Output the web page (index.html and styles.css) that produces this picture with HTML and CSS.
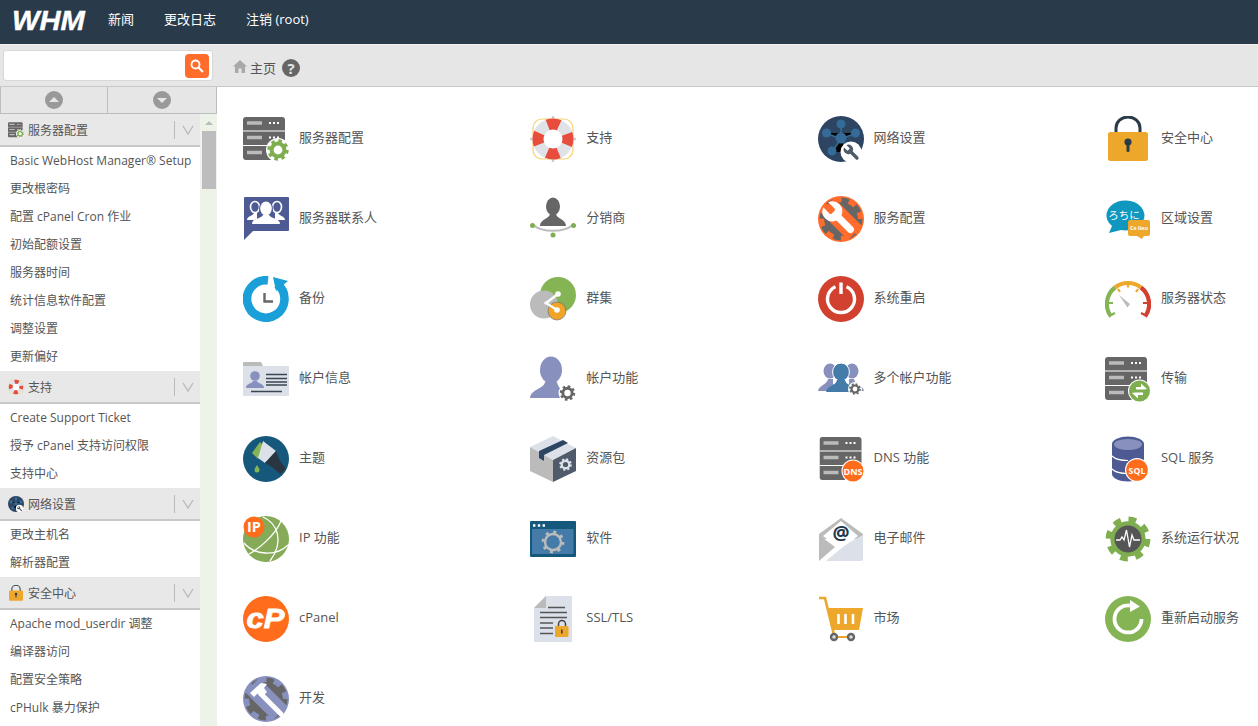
FILE: index.html
```html
<!DOCTYPE html>
<html lang="zh-CN">
<head>
    <meta charset="UTF-8">
    <meta name="viewport" content="width=device-width, initial-scale=1.0">
    <title>WHM</title>
    <link rel="stylesheet" href="styles.css">
</head>
<body>
    <!-- icon sprite, every icon is drawn in a 46x46 box -->
    <svg class="sprite" xmlns="http://www.w3.org/2000/svg">
        <symbol id="gear" viewBox="-12 -12 24 24">
            <circle r="7" fill="none" stroke="currentColor" stroke-width="4.4"/>
            <circle r="10" fill="none" stroke="currentColor" stroke-width="3.4" stroke-dasharray="3.9 3.95"/>
        </symbol>
        <symbol id="wrench" viewBox="0 0 24 24">
            <path transform="translate(24 0) scale(-1 1)" d="M14.7 6.3a1 1 0 0 0 0 1.4l1.6 1.6a1 1 0 0 0 1.4 0l3.77-3.77a6 6 0 0 1-7.94 7.94l-6.91 6.91a2.12 2.12 0 0 1-3-3l6.91-6.91a6 6 0 0 1 7.94-7.94l-3.76 3.76z" fill="currentColor"/>
        </symbol>
        <symbol id="srv" viewBox="0 0 46 46">
            <rect x="0" y="1" width="42" height="43" rx="3" fill="#666"/>
            <path d="M0 15h42M0 29.5h42" stroke="#fff" stroke-width="1"/>
            <path d="M4 7h15M4 21.5h15M4 36.5h15" stroke="#bbb" stroke-width="3.4"/>
            <path d="M26 7h2M30 7h2M34 7h2M26 21.5h2M30 21.5h2M34 21.5h2" stroke="#fff" stroke-width="2.2"/>
        </symbol>
        <symbol id="i-server" viewBox="0 0 46 46">
            <use href="#srv" width="46" height="46"/>
            <circle cx="35" cy="34" r="12" fill="#fff"/>
            <use href="#gear" x="24" y="23" width="22" height="22" color="#7fae50"/>
        </symbol>
        <symbol id="i-support" viewBox="0 0 46 46">
            <rect x="3" y="3" width="40" height="40" rx="9" fill="none" stroke="#f7d26e" stroke-width="1.2"/>
            <path d="M23 0v46M0 23h46" stroke="#ccc" stroke-width="2.4"/>
            <circle cx="23" cy="23" r="15" fill="#fff" stroke="#dfe3e8" stroke-width="11"/>
            <circle cx="23" cy="23" r="15" fill="none" stroke="#e74c3c" stroke-width="11" stroke-dasharray="11.78 11.78" stroke-dashoffset="5.89"/>
        </symbol>
        <symbol id="i-network" viewBox="0 0 46 46">
            <circle cx="23" cy="23" r="23" fill="#2d4562"/>
            <path d="M23 8V23M8 17L23 23L38 17M14 36L23 23L32 36" stroke="#356b97" stroke-width="1.6"/>
            <g fill="#356b97">
                <circle cx="23" cy="8" r="4.5"/><circle cx="8.5" cy="17" r="4.5"/><circle cx="37.5" cy="17" r="4.5"/>
                <circle cx="14" cy="35" r="4.5"/><circle cx="23" cy="22" r="5.5"/>
            </g>
            <circle cx="33" cy="36" r="10.5" fill="#fff"/>
            <use href="#wrench" x="24" y="27" width="19" height="19" color="#4f5b66"/>
        </symbol>
        <symbol id="i-lock" viewBox="0 0 46 46">
            <path d="M11 17V12a12 11 0 0 1 24 0v5" fill="none" stroke="#2b3a4a" stroke-width="3"/>
            <rect x="3" y="16" width="40" height="29" rx="2.5" fill="#eda72a"/>
            <circle cx="23" cy="26" r="3.6" fill="#2b3a4a"/>
            <rect x="21.5" y="27" width="3" height="9" rx="1.5" fill="#2b3a4a"/>
        </symbol>
        <symbol id="i-contacts" viewBox="0 0 46 46">
            <path d="M2 1h43a1 1 0 0 1 1 1v32a1 1 0 0 1-1 1H10l-9 9V2a1 1 0 0 1 1-1z" fill="#4e5a94"/>
            <g fill="none" stroke="#fff" stroke-width="1.6">
                <ellipse cx="12" cy="11" rx="4.5" ry="5.5"/><ellipse cx="34" cy="11" rx="4.5" ry="5.5"/>
            </g>
            <path d="M4 24c0-4 6-4 7-7h3v7zM42 24c0-4-6-4-7-7h-3v7z" fill="#fff"/>
            <ellipse cx="23" cy="12.5" rx="7" ry="8" fill="#4e5a94"/>
            <path d="M7.5 29.500c0-7 10-6 12-10h7c2 4 12 3 12 10z" fill="#4e5a94"/>
            <g fill="#fff">
                <ellipse cx="23" cy="12.5" rx="5.8" ry="7"/>
                <path d="M9 28c0-6 9-5 11-9h6c2 4 11 3 11 9z"/>
            </g>
        </symbol>
        <symbol id="i-reseller" viewBox="0 0 46 46">
            <ellipse cx="23" cy="10.5" rx="7" ry="9" fill="#666"/>
            <path d="M10 30c0-7 9-7 10-12h6c1 5 10 5 10 12z" fill="#666"/>
            <path d="M4 29.5c8 7 30 7 38 0" fill="none" stroke="#bbb" stroke-width="1.8"/>
            <g fill="#7fae50"><circle cx="2.5" cy="29.5" r="2.5"/><circle cx="43.5" cy="29.5" r="2.5"/><circle cx="23" cy="39" r="2.5"/></g>
        </symbol>
        <symbol id="i-service" viewBox="0 0 46 46">
            <circle cx="23" cy="23" r="23" fill="#ff6c2c"/>
            <use href="#gear" x="1" y="1" width="44" height="44" color="#666"/>
            <path d="M9 9L37 37" stroke="#ff6c2c" stroke-width="20"/>
            <use href="#wrench" x="1" y="2" width="40" height="40" color="#fff"/>
        </symbol>
        <symbol id="i-locale" viewBox="0 0 46 46">
            <path d="M4 37l3-7a19 15 0 1 1 9 4z" fill="#0f97c0"/>
            <text x="19" y="23" text-anchor="middle" class="svg-cjk" font-size="10.500" fill="#fff">ろちに</text>
            <rect x="23" y="24" width="22" height="16" rx="2" fill="#eda72a"/>
            <path d="M32 40h7l-2 3z" fill="#eda72a"/>
            <text x="34" y="34" text-anchor="middle" class="svg-label" font-size="5.4" font-weight="700" fill="#fff">Ce lieu</text>
        </symbol>
        <symbol id="i-backup" viewBox="0 0 46 46">
            <path d="M25 4.4A18.7 18.7 0 1 0 34 8" fill="none" stroke="#1a9fd9" stroke-width="8.6"/>
            <path d="M30 1l15 4-12 10z" fill="#1a9fd9"/>
            <path d="M21.5 17v8.5H30" fill="none" stroke="#666" stroke-width="2.4"/>
        </symbol>
        <symbol id="i-cluster" viewBox="0 0 46 46">
            <circle cx="28" cy="19" r="18" fill="#85b455"/>
            <circle cx="14" cy="28.5" r="14" fill="#bbb"/>
            <circle cx="27" cy="35" r="9" fill="#f0a52a" stroke="#5c6570" stroke-width="0.6"/>
            <path d="M28 18L16 27l11 7" fill="none" stroke="#fff" stroke-width="2.2"/>
            <circle cx="28" cy="18" r="2.8" fill="#fff"/><circle cx="27" cy="34" r="2.8" fill="#fff"/><circle cx="16" cy="27" r="1.6" fill="#fff"/>
        </symbol>
        <symbol id="i-restart" viewBox="0 0 46 46">
            <circle cx="23" cy="23" r="23" fill="#d2412f"/>
            <path d="M17.5 10.7A13.5 13.5 0 1 0 28.5 10.7M23 6.5V18" fill="none" stroke="#fff" stroke-width="3.4"/>
        </symbol>
        <symbol id="i-status" viewBox="0 0 46 46">
            <path d="M6 40.6A21 21 0 0 1 10 11.5" fill="none" stroke="#85b455" stroke-width="4.2"/>
            <path d="M10 11.5A21 21 0 0 1 36 11.5" fill="none" stroke="#eda72a" stroke-width="4.2"/>
            <path d="M36 11.5A21 21 0 0 1 40 40.6" fill="none" stroke="#d2412f" stroke-width="4.2"/>
            <path d="M6 39l4-2M4 27h4" stroke-width="2.2" stroke="#85b455"/>
            <path d="M13 13l2 3M23 7v4.500M33 13l-2 3" stroke-width="2.2" stroke="#eda72a"/>
            <path d="M42 27h-4M40 39l-4-2" stroke-width="2.2" stroke="#d2412f"/>
            <path d="M14 19l11 9-2.500 3.500z" fill="#bbb"/>
        </symbol>
        <symbol id="i-account" viewBox="0 0 46 46">
            <path d="M0 10V7a1 1 0 0 1 1-1h17l2 4z" fill="#bbb"/>
            <rect x="0" y="10" width="46" height="30" rx="1" fill="#dbe0e9"/>
            <circle cx="12" cy="20" r="4.8" fill="#8891bd"/>
            <path d="M3 32c0-5 6-4 7-7h4c1 3 7 2 7 7z" fill="#8891bd"/>
            <path d="M23 18.5h21M23 22.5h21M23 26h21M23 29h21M8 35.5h31" stroke="#3a4652" stroke-width="1.4"/>
        </symbol>
        <symbol id="i-functions" viewBox="0 0 46 46">
            <ellipse cx="21" cy="14" rx="11" ry="13.5" fill="#8891bd"/>
            <path d="M0 42c1-9 14-9 15-16h12c1 7 7 8 9 16z" fill="#8891bd"/>
            <circle cx="37.5" cy="37" r="9" fill="#fff"/>
            <use href="#gear" x="29.5" y="29" width="16" height="16" color="#666"/>
        </symbol>
        <symbol id="i-multi" viewBox="0 0 46 46">
            <g fill="#8891bd">
                <ellipse cx="12" cy="15" rx="6.5" ry="7.5"/><ellipse cx="34" cy="15" rx="6.5" ry="7.5"/>
                <path d="M0 35c1-6 9-6 10-12h5v12z"/><path d="M46 35c-1-6-9-6-10-12h-5v12z"/>
            </g>
            <ellipse cx="23" cy="16" rx="8.4" ry="9" fill="#447ba8" stroke="#fff" stroke-width="1"/>
            <path d="M8 36c1-7 10-6 11-12h8c1 6 10 5 11 12z" fill="#447ba8"/>
            <circle cx="37" cy="33" r="7" fill="#fff"/>
            <use href="#gear" x="31" y="27" width="12" height="12" color="#666"/>
        </symbol>
        <symbol id="i-transfer" viewBox="0 0 46 46">
            <use href="#srv" width="46" height="46"/>
            <circle cx="34.5" cy="35" r="11.5" fill="#fff"/>
            <circle cx="34.5" cy="35" r="10.5" fill="#7fae50"/>
            <path d="M31 31h5v-3.4l6 5.4-3 .6h-8zM38 39h-5v3.4l-6-5.4 3-.6h8z" fill="#fff"/>
        </symbol>
        <symbol id="i-theme" viewBox="0 0 46 46">
            <circle cx="23" cy="23" r="23" fill="#16577c"/>
            <path d="M17 6L9 17l6 6 6-13z" fill="#85b455"/>
            <path d="M20 5l13 10-11 12-7-5z" fill="#dbe0e9"/>
            <path d="M33 15L22 27l7 4 8 7 6-5-6-8z" fill="#2a3542"/>
            <path d="M14 29c2 3 2.5 4 2.5 5a2.5 2.5 0 0 1-5 0c0-1 .5-2 2.5-5z" fill="#85b455"/>
        </symbol>
        <symbol id="i-package" viewBox="0 0 46 46">
            <path d="M23 0l23 12-23 12L0 11z" fill="#dbe0e9"/>
            <path d="M0 11l23 13v22L0 35z" fill="#bbb"/>
            <path d="M23 24l23-12v23L23 46z" fill="#4f5b6a"/>
            <path d="M9 15L33 4l5 3L14 19v6l-5-3z" fill="#2d4562"/>
            <use href="#gear" x="29" y="22" width="13" height="13" color="#dbe0e9"/>
        </symbol>
        <symbol id="i-dns" viewBox="0 0 46 46">
            <use href="#srv" x="1.5" width="46" height="46"/>
            <circle cx="35" cy="35" r="11.5" fill="#fff"/>
            <circle cx="35" cy="35" r="10.5" fill="#ff6c1c"/>
            <text x="35" y="38.500" text-anchor="middle" class="svg-label" font-size="9" font-weight="700" fill="#fff">DNS</text>
        </symbol>
        <symbol id="i-sql" viewBox="0 0 46 46">
            <path d="M7 8h32v30c0 4-7 7.500-16 7.500S7 42 7 38z" fill="#4e5a94"/>
            <path d="M7 20c3 3 9 4.500 16 4.500M7 33c3 3 9 4.500 16 4.500" fill="none" stroke="#fff" stroke-width="1.200"/>
            <ellipse cx="23" cy="8" rx="16" ry="7.500" fill="#4e5a94"/>
            <ellipse cx="23" cy="8.500" rx="14" ry="5.500" fill="#8891bd"/>
            <circle cx="32" cy="34" r="12" fill="#fff"/>
            <circle cx="32" cy="34" r="10.800" fill="#ff6c1c"/>
            <text x="32" y="37.500" text-anchor="middle" class="svg-label" font-size="8.800" font-weight="700" fill="#fff">SQL</text>
        </symbol>
        <symbol id="i-ip" viewBox="0 0 46 46">
            <circle cx="23" cy="23" r="23" fill="#85ab58"/>
            <g fill="none" stroke="#fff" stroke-width="1.300">
                <path d="M20 1c14 6 22 24 7 44"/>
                <path d="M1 27c10 12 32 14 44 2"/>
                <path d="M6 38c8-4 26-18 32-33"/>
            </g>
            <circle cx="11" cy="11" r="10.500" fill="#ff6c1c"/>
            <text x="11" y="16" text-anchor="middle" class="svg-label" font-size="14.500" font-weight="700" fill="#fff">IP</text>
        </symbol>
        <symbol id="i-software" viewBox="0 0 46 46">
            <rect x="0" y="5" width="46" height="36" rx="1" fill="#16577c"/>
            <rect x="2" y="13" width="41.500" height="25" fill="#447ba8"/>
            <path d="M3 9.500h2.400M7.800 9.500h2.400M12.600 9.500h2.400" stroke="#fff" stroke-width="2.400"/>
            <circle cx="23" cy="26" r="8" fill="none" stroke="#bbb" stroke-width="2.400"/>
            <circle cx="23" cy="26" r="10" fill="none" stroke="#bbb" stroke-width="2.800" stroke-dasharray="3 4.850"/>
        </symbol>
        <symbol id="i-email" viewBox="0 0 46 46">
            <path d="M23 2L45 18v5H1v-5z" fill="#bbb"/>
            <path d="M23 5L40 20 23 33 5 20z" fill="#fff"/>
            <path d="M1 19l16 12L1 45z" fill="#bbb"/>
            <path d="M45 19v24a2 2 0 0 1-2 2H8l17-14 7-5z" fill="#dbe0e9"/>
            <text x="23" y="24" text-anchor="middle" class="svg-label" font-size="19" font-weight="700" fill="#23384d">@</text>
        </symbol>
        <symbol id="i-health" viewBox="0 0 46 46">
            <use href="#gear" width="46" height="46" color="#7fae50"/>
            <circle cx="23" cy="23" r="13.500" fill="#555"/>
            <path d="M11 24h4l2-3 2 3 2.500-10 3 17 2.500-12 2 5h6" fill="none" stroke="#fff" stroke-width="1.300"/>
        </symbol>
        <symbol id="i-cpanel" viewBox="0 0 46 46">
            <circle cx="23" cy="23" r="23" fill="#ff6c1c"/>
            <text x="3.500" y="32" textLength="38" lengthAdjust="spacingAndGlyphs" class="svg-logo" font-size="28" fill="#fff" stroke="#fff" stroke-width="0.800">cP</text>
        </symbol>
        <symbol id="i-ssl" viewBox="0 0 46 46">
            <path d="M16 0h26v46H4V12z" fill="#dbe0e9"/>
            <path d="M4 12L16 0v12z" fill="#bbb"/>
            <path d="M18 11.500h17M10 16.500h27M10 21.500h27M10 27h13M10 32h13M10 37.500h13" stroke="#555" stroke-width="1.700"/>
            <path d="M28.500 30v-2a3.500 3.500 0 0 1 7 0v2" fill="none" stroke="#444" stroke-width="1.500"/>
            <rect x="25" y="30" width="13.500" height="11" rx="1" fill="#eda72a"/>
            <path d="M31.800 33.500v4" stroke="#333" stroke-width="1.500"/>
        </symbol>
        <symbol id="i-market" viewBox="0 0 46 46">
            <path d="M1 2h6l9 37" fill="none" stroke="#eda72a" stroke-width="2.600"/>
            <path d="M10 12h35l-4 22H15z" fill="#eda72a"/>
            <path d="M20.500 18v10M27.500 18v10M35 18v10" stroke="#fff" stroke-width="2.600"/>
            <path d="M16 41h17" stroke="#eda72a" stroke-width="2"/>
            <g fill="#ddd" stroke="#666" stroke-width="2.400"><circle cx="16" cy="41" r="3"/><circle cx="33" cy="41" r="3"/></g>
        </symbol>
        <symbol id="i-reboot" viewBox="0 0 46 46">
            <circle cx="23" cy="23" r="23" fill="#85b455"/>
            <path d="M36.500 23A13.500 13.500 0 1 1 25 9.600" fill="none" stroke="#fff" stroke-width="3.800"/>
            <path d="M25 4l10 6.500-10 5.500z" fill="#fff"/>
        </symbol>
        <symbol id="i-develop" viewBox="0 0 46 46">
            <circle cx="23" cy="23" r="23" fill="#8891bd"/>
            <use href="#gear" x="1" y="1" width="44" height="44" color="#666"/>
            <path d="M9 9L37 37" stroke="#8891bd" stroke-width="20"/>
            <path d="M17 17l21 21" stroke="#fff" stroke-width="5" stroke-linecap="round"/>
            <path d="M7 17L18 7l6 1-3 4 3 4-5 5-4-4-4 4z" fill="#fff"/>
        </symbol>
    </svg>

    <header class="topbar">
        <span class="logo">WHM</span>
        <nav class="topnav">
            <a>新闻</a>
            <a>更改日志</a>
            <a>注销 (root)</a>
        </nav>
    </header>

    <div class="layout">
        <aside class="sidebar">
            <div class="search-bar">
                <div class="search-box">
                    <span class="search-btn">
                        <svg viewBox="0 0 16 16" width="16" height="16"><circle cx="6.500" cy="6.500" r="4" fill="none" stroke="#fff" stroke-width="1.800"/><path d="M9.500 9.500l4.500 4.500" stroke="#fff" stroke-width="2.200"/></svg>
                    </span>
                </div>
            </div>
            <div class="collapse-row">
                <button class="collapse-btn"><span class="round-btn"><svg viewBox="0 0 18 18" width="18" height="18"><path d="M4 11L9 6l5 5z" fill="#e6e6e6"/></svg></span></button>
                <button class="collapse-btn"><span class="round-btn"><svg viewBox="0 0 18 18" width="18" height="18"><path d="M4 7L9 12l5-5z" fill="#e6e6e6"/></svg></span></button>
            </div>
            <div class="menu-wrap">
                <div class="menu">
                    <div class="menu-head">
                        <svg class="menu-icon"><use href="#i-server"/></svg><span class="menu-title">服务器配置</span>
                        <span class="menu-toggle"><svg viewBox="0 0 12 10" width="12" height="10"><path d="M1 1l5 8 5-8" fill="none" stroke="#bbb" stroke-width="1.400"/></svg></span>
                    </div>
                    <a class="menu-item">Basic WebHost Manager® Setup</a>
                    <a class="menu-item">更改根密码</a>
                    <a class="menu-item">配置 cPanel Cron 作业</a>
                    <a class="menu-item">初始配额设置</a>
                    <a class="menu-item">服务器时间</a>
                    <a class="menu-item">统计信息软件配置</a>
                    <a class="menu-item">调整设置</a>
                    <a class="menu-item">更新偏好</a>
                    <div class="menu-head">
                        <svg class="menu-icon"><use href="#i-support"/></svg><span class="menu-title">支持</span>
                        <span class="menu-toggle"><svg viewBox="0 0 12 10" width="12" height="10"><path d="M1 1l5 8 5-8" fill="none" stroke="#bbb" stroke-width="1.400"/></svg></span>
                    </div>
                    <a class="menu-item">Create Support Ticket</a>
                    <a class="menu-item">授予 cPanel 支持访问权限</a>
                    <a class="menu-item">支持中心</a>
                    <div class="menu-head">
                        <svg class="menu-icon"><use href="#i-network"/></svg><span class="menu-title">网络设置</span>
                        <span class="menu-toggle"><svg viewBox="0 0 12 10" width="12" height="10"><path d="M1 1l5 8 5-8" fill="none" stroke="#bbb" stroke-width="1.400"/></svg></span>
                    </div>
                    <a class="menu-item">更改主机名</a>
                    <a class="menu-item">解析器配置</a>
                    <div class="menu-head">
                        <svg class="menu-icon"><use href="#i-lock"/></svg><span class="menu-title">安全中心</span>
                        <span class="menu-toggle"><svg viewBox="0 0 12 10" width="12" height="10"><path d="M1 1l5 8 5-8" fill="none" stroke="#bbb" stroke-width="1.400"/></svg></span>
                    </div>
                    <a class="menu-item">Apache mod_userdir 调整</a>
                    <a class="menu-item">编译器访问</a>
                    <a class="menu-item">配置安全策略</a>
                    <a class="menu-item">cPHulk 暴力保护</a>
                </div>
                <div class="scroller">
                    <svg class="scroll-arrow" viewBox="0 0 10 6" width="10" height="6"><path d="M1 5l4-4 4 4z" fill="#bbb"/></svg>
                    <div class="scroll-thumb"></div>
                </div>
            </div>
        </aside>

        <main class="main">
            <div class="breadcrumb">
                <svg class="home-icon" viewBox="0 0 14 13" width="14" height="13"><path d="M7 0L0 6.500h2V13h3.500V8.500h3V13H12V6.500h2z" fill="#a9a9a9"/></svg>
                <span>主页</span>
                <span class="help">?</span>
            </div>
            <div class="grid">
                <a class="tile"><svg class="tile-icon"><use href="#i-server"/></svg><span>服务器配置</span></a>
                <a class="tile"><svg class="tile-icon"><use href="#i-support"/></svg><span>支持</span></a>
                <a class="tile"><svg class="tile-icon"><use href="#i-network"/></svg><span>网络设置</span></a>
                <a class="tile"><svg class="tile-icon"><use href="#i-lock"/></svg><span>安全中心</span></a>
                <a class="tile"><svg class="tile-icon"><use href="#i-contacts"/></svg><span>服务器联系人</span></a>
                <a class="tile"><svg class="tile-icon"><use href="#i-reseller"/></svg><span>分销商</span></a>
                <a class="tile"><svg class="tile-icon"><use href="#i-service"/></svg><span>服务配置</span></a>
                <a class="tile"><svg class="tile-icon"><use href="#i-locale"/></svg><span>区域设置</span></a>
                <a class="tile"><svg class="tile-icon"><use href="#i-backup"/></svg><span>备份</span></a>
                <a class="tile"><svg class="tile-icon"><use href="#i-cluster"/></svg><span>群集</span></a>
                <a class="tile"><svg class="tile-icon"><use href="#i-restart"/></svg><span>系统重启</span></a>
                <a class="tile"><svg class="tile-icon"><use href="#i-status"/></svg><span>服务器状态</span></a>
                <a class="tile"><svg class="tile-icon"><use href="#i-account"/></svg><span>帐户信息</span></a>
                <a class="tile"><svg class="tile-icon"><use href="#i-functions"/></svg><span>帐户功能</span></a>
                <a class="tile"><svg class="tile-icon"><use href="#i-multi"/></svg><span>多个帐户功能</span></a>
                <a class="tile"><svg class="tile-icon"><use href="#i-transfer"/></svg><span>传输</span></a>
                <a class="tile"><svg class="tile-icon"><use href="#i-theme"/></svg><span>主题</span></a>
                <a class="tile"><svg class="tile-icon"><use href="#i-package"/></svg><span>资源包</span></a>
                <a class="tile"><svg class="tile-icon"><use href="#i-dns"/></svg><span>DNS 功能</span></a>
                <a class="tile"><svg class="tile-icon"><use href="#i-sql"/></svg><span>SQL 服务</span></a>
                <a class="tile"><svg class="tile-icon"><use href="#i-ip"/></svg><span>IP 功能</span></a>
                <a class="tile"><svg class="tile-icon"><use href="#i-software"/></svg><span>软件</span></a>
                <a class="tile"><svg class="tile-icon"><use href="#i-email"/></svg><span>电子邮件</span></a>
                <a class="tile"><svg class="tile-icon"><use href="#i-health"/></svg><span>系统运行状况</span></a>
                <a class="tile"><svg class="tile-icon"><use href="#i-cpanel"/></svg><span>cPanel</span></a>
                <a class="tile"><svg class="tile-icon"><use href="#i-ssl"/></svg><span>SSL/TLS</span></a>
                <a class="tile"><svg class="tile-icon"><use href="#i-market"/></svg><span>市场</span></a>
                <a class="tile"><svg class="tile-icon"><use href="#i-reboot"/></svg><span>重新启动服务</span></a>
                <a class="tile"><svg class="tile-icon"><use href="#i-develop"/></svg><span>开发</span></a>
            </div>
        </main>
    </div>
</body>
</html>
```

FILE: styles.css
```css
* {
    box-sizing: border-box;
}
html, body {
    height: 100%;
}
body {
    margin: 0;
    overflow: hidden;
    background: #fff;
    color: #555;
    font-family: "Open Sans", "Noto Sans CJK SC", sans-serif;
    font-size: 13px;
}
.sprite {
    display: none;
}
.svg-cjk {
    font-family: "Noto Sans CJK JP", sans-serif;
}
.svg-label {
    font-family: "Open Sans", sans-serif;
}
.svg-logo {
    font-family: "Liberation Sans", sans-serif;
    font-weight: 700;
    font-style: italic;
}

/* top bar */
.topbar {
    display: flex;
    align-items: center;
    height: 44px;
    background: #293a4a;
    color: #fff;
}
.logo {
    display: block;
    flex: none;
    width: 108px;
    padding: 0 0 2px 12px;
    font-family: "Liberation Sans", sans-serif;
    font-size: 27px;
    font-style: italic;
    font-weight: 700;
    -webkit-text-stroke: 0.4px #fff;
    transform: scaleX(1.08);
    transform-origin: 12px 50%;
}
.topnav {
    display: flex;
    gap: 30px;
    padding-bottom: 8px;
}
.topnav a {
    color: #fff;
}

.layout {
    display: flex;
    height: 682px;
}

/* sidebar */
.sidebar {
    display: flex;
    flex-direction: column;
    flex: none;
    width: 217px;
    overflow: hidden;
    font-size: 12px;
}
.search-bar {
    flex: none;
    height: 43px;
    padding: 5px 4px 5px 3px;
    background: #e6e6e6;
    border-top: 1px solid #f2f2f2;
    border-bottom: 1px solid #c8c8c8;
}
.search-box {
    display: flex;
    justify-content: flex-end;
    align-items: center;
    height: 31px;
    padding-right: 3px;
    background: #fff;
    border: 1px solid #d8d8d8;
    border-radius: 3px;
}
.search-btn {
    display: flex;
    align-items: center;
    justify-content: center;
    width: 24px;
    height: 24px;
    background: #ff6c2c;
    border-radius: 4px;
}
.collapse-row {
    display: flex;
    flex: none;
    height: 27px;
    background: #e6e6e6;
    border-bottom: 1px solid #bdbdbd;
}
.collapse-btn {
    display: flex;
    flex: none;
    align-items: center;
    justify-content: center;
    width: 107px;
    padding: 0;
    background: none;
    border: 0;
    border-left: 1px solid #bdbdbd;
}
.collapse-btn:last-child {
    width: 110px;
    border-right: 1px solid #bdbdbd;
}
.round-btn {
    display: block;
    width: 18px;
    height: 18px;
    background: #999;
    border-radius: 50%;
}
.menu-wrap {
    display: flex;
    flex: 1;
    min-height: 0;
}
.menu {
    flex: none;
    width: 200px;
}
.menu-head {
    display: flex;
    align-items: center;
    height: 33px;
    padding-left: 8px;
    background: #e8e8e8;
    border-bottom: 2px solid #c8c8c8;
}
.menu-icon {
    flex: none;
    width: 16px;
    height: 16px;
    margin-right: 4px;
}
.menu-title {
    flex: 1;
}
.menu-toggle {
    display: flex;
    align-items: center;
    justify-content: center;
    width: 26px;
    height: 18px;
    border-left: 1px solid #bbb;
}
.menu-item {
    display: block;
    height: 28px;
    padding-left: 10px;
    line-height: 28px;
    white-space: nowrap;
}
.scroller {
    display: flex;
    flex: none;
    flex-direction: column;
    align-items: center;
    width: 17px;
    padding-top: 6px;
    background: #eef3ea;
}
.scroll-arrow {
    flex: none;
}
.scroll-thumb {
    flex: none;
    width: 14px;
    height: 58px;
    margin-top: 5px;
    background: #bdbdbd;
}

/* main area */
.main {
    flex: 1;
    min-width: 0;
    overflow: hidden;
}
.breadcrumb {
    display: flex;
    align-items: center;
    height: 43px;
    padding: 4px 0 0 16px;
    background: #e6e6e6;
    border-top: 1px solid #f2f2f2;
    border-bottom: 1px solid #c8c8c8;
}
.home-icon {
    margin: -2px 3px 0 0;
}
.help {
    display: flex;
    align-items: center;
    justify-content: center;
    width: 18px;
    height: 18px;
    margin-left: 6px;
    background: #666;
    border-radius: 50%;
    color: #e6e6e6;
    font-size: 15px;
    font-weight: 700;
}
.grid {
    display: grid;
    grid-template-columns: repeat(4, 287.3px);
    grid-auto-rows: 46px;
    row-gap: 34px;
    padding: 29px 0 0 26px;
}
.tile {
    display: flex;
    align-items: center;
    gap: 10px;
    white-space: nowrap;
}
.tile span {
    padding-bottom: 5px;
}
.tile-icon {
    flex: none;
    width: 46px;
    height: 46px;
}
```
